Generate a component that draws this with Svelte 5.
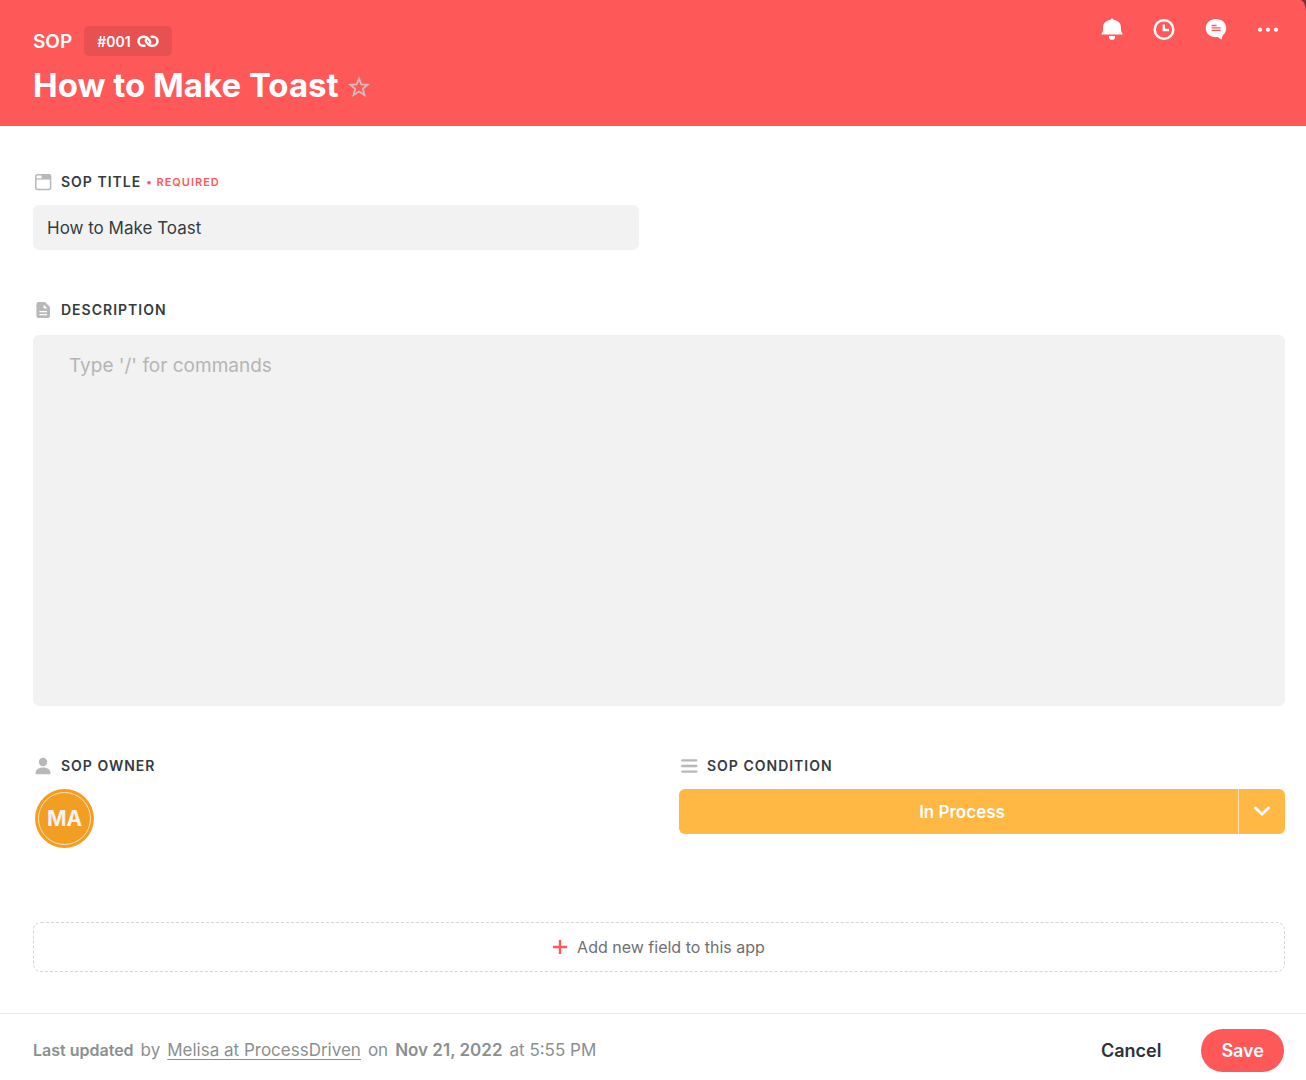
<script>
  let title = 'How to Make Toast';
  let description = '';
  let condition = 'In Process';
  let starred = false;

  const conditions = ['Not Started', 'In Process', 'Complete'];
</script>

<div class="record">
  <header class="top">
    <div class="banner">
      <div class="heading">
        <div class="app-line">
          <span class="app-name">SOP</span>
          <button class="record-id">
            #001
            <svg width="22" height="14" viewBox="0 0 22 14" fill="none" stroke="#fff" stroke-width="2.5" stroke-linecap="round">
              <path d="M7.400 11.800H6a4.500 4.500 0 0 1 0-9H7.600C10 2.800 11.200 4.600 12.400 6.200 13.200 7.300 13.400 8 13.100 8.700" />
              <path d="M14.600 2.800H16a4.500 4.500 0 0 1 0 9H14.400C12 11.800 10.800 10 9.600 8.400 8.800 7.300 8.600 6.600 8.900 5.900" />
            </svg>
          </button>
        </div>
        <div class="title-line">
          <h1>{title}</h1>
          <button class="star" aria-label="Favorite" aria-pressed={starred} on:click={() => starred = !starred}>
            <svg width="22" height="22" viewBox="0 0 22 22" fill={starred ? '#d3bcbe' : 'none'} stroke="#d3bcbe" stroke-width="1.8">
              <path d="M11 2.6 13.3 8.4 19.6 8.8 14.8 12.8 16.5 19 11 15.6 5.5 19 7.2 12.8 2.4 8.8 8.7 8.4Z" />
            </svg>
          </button>
        </div>
      </div>

      <nav class="tools" aria-label="Record tools">
        <button aria-label="Notifications">
          <svg width="24" height="24" viewBox="0 0 24 24" fill="#fff">
            <path d="M10.4 1.700a1.700 1.700 0 0 1 3.200 0C18.300 2.500 21 5.500 21 9.600v3.500L22.600 15.700V16.600H1.400v-.9L3 13.100V9.600C3 5.500 5.700 2.500 10.400 1.700Z" />
            <path d="M9 18h6v1.200a2.500 2.500 0 0 1-2.500 2.500h-1A2.500 2.500 0 0 1 9 19.200Z" />
          </svg>
        </button>
        <button aria-label="History">
          <svg width="24" height="24" viewBox="0 0 24 24" fill="none" stroke="#fff" stroke-width="2.4">
            <circle cx="12" cy="11.500" r="9.300" />
            <path d="M11.800 6.500V12H17" />
          </svg>
        </button>
        <button aria-label="Comments">
          <svg width="24" height="24" viewBox="0 0 24 24">
            <path fill="#fff" d="M12 1c5.900 0 10.200 3.900 10.200 9.200 0 2.600-.9 4.600-2.700 6.300-1.300 1.500-1.500 3-1.700 5.100-1.600-.7-3-1.500-4-2.500-.6.100-1.200.1-1.800.1-5.900 0-10.200-3.700-10.200-9S6.100 1 12 1Z" />
            <path stroke="#ff5858" stroke-width="1.300" d="M7.600 7.500h5M7.600 9.900h9M7.600 12.300h9" />
          </svg>
        </button>
        <button aria-label="More">
          <svg width="24" height="24" viewBox="0 0 24 24" fill="#fff">
            <circle cx="4" cy="11.700" r="2.100" />
            <circle cx="12" cy="11.700" r="2.100" />
            <circle cx="20" cy="11.700" r="2.100" />
          </svg>
        </button>
      </nav>
    </div>
  </header>

  <main class="fields">
    <div class="field half">
      <label for="sop-title">
        <svg width="20" height="18" viewBox="0 0 20 18">
          <rect x="2.800" y="1.800" width="14.800" height="14.800" rx="2" fill="none" stroke="#b8b8b8" stroke-width="1.500" />
          <path d="M8.500 1.500H17.500V6H8.500Z" fill="#b8b8b8" />
          <path d="M3 6H17.500" stroke="#b8b8b8" stroke-width="1.200" />
        </svg>
        SOP title
        <span class="required">• Required</span>
      </label>
      <input id="sop-title" type="text" bind:value={title} />
    </div>

    <div class="field roomy">
      <label for="sop-description">
        <svg width="20" height="18" viewBox="0 0 20 18">
          <path fill="#b8b8b8" d="M5.400 1H12L17 6v9a2 2 0 0 1-2 2H5.400a2 2 0 0 1-2-2V3a2 2 0 0 1 2-2Z" />
          <path fill="#fff" d="M10.600 3.600 14.400 7.400H11.800a1.200 1.200 0 0 1-1.200-1.200Z" />
          <path stroke="#fff" stroke-width="1.300" d="M6.400 10.700H14M6.400 13.700H14" />
        </svg>
        Description
      </label>
      <textarea id="sop-description" placeholder="Type '/' for commands" bind:value={description}></textarea>
    </div>

    <div class="row">
      <div class="field">
        <div class="label" id="owner-label">
          <svg width="20" height="18" viewBox="0 0 20 18" fill="#b8b8b8">
            <circle cx="10" cy="5" r="4.200" />
            <path d="M2.500 16.500c0-3.800 2.800-6 7.500-6s7.500 2.200 7.500 6c0 .4-.3.700-.7.700H3.200c-.4 0-.7-.3-.7-.7Z" />
          </svg>
          SOP owner
        </div>
        <button class="avatar" aria-labelledby="owner-label"><span>MA</span></button>
      </div>

      <div class="field">
        <label for="sop-condition">
          <svg width="20" height="18" viewBox="0 0 20 18" stroke="#b8b8b8" stroke-width="2.400" stroke-linecap="round">
            <path d="M3.300 3.400H17.300M3.300 9H17.300M3.300 14.600H17.300" />
          </svg>
          SOP condition
        </label>
        <div class="condition">
          <select id="sop-condition" bind:value={condition}>
            {#each conditions as option}
              <option value={option}>{option}</option>
            {/each}
          </select>
          <span class="chevron">
            <svg width="18" height="12" viewBox="0 0 18 12" fill="none" stroke="#fff" stroke-width="2.800" stroke-linecap="round" stroke-linejoin="round">
              <path d="M2.400 2 9 8.300 15.600 2" />
            </svg>
          </span>
        </div>
      </div>
    </div>

    <button class="add-field">
      <svg width="14" height="14" viewBox="0 0 14 14" stroke="#ff5858" stroke-width="2.400">
        <path d="M7 0V14M0 7H14" />
      </svg>
      Add new field to this app
    </button>
  </main>

  <footer class="bottom">
    <p class="updated">
      <strong class="lead">Last updated</strong>
      <span>by</span>
      <a href="#user">Melisa at ProcessDriven</a>
      <span>on</span>
      <strong>Nov 21, 2022</strong>
      <span>at 5:55 PM</span>
    </p>
    <div class="actions">
      <button class="cancel">Cancel</button>
      <button class="save">Save</button>
    </div>
  </footer>
</div>

<style>
  :global(body) {
    background: #fff;
  }

  .record {
    min-height: 100vh;
    display: flex;
    flex-direction: column;
    font-family: Inter, sans-serif;
    font-size: 17px;
    color: #343c3f;
  }

  .record, .record * {
    box-sizing: border-box;
  }

  button, input, textarea, select {
    margin: 0;
    padding: 0;
    border: none;
    background: none;
    font: inherit;
    color: inherit;
  }

  button, select {
    cursor: pointer;
  }

  svg {
    display: block;
    flex: none;
  }

  /* Header */
  .top {
    background: #7a3236;
  }

  .banner {
    display: flex;
    justify-content: space-between;
    align-items: flex-start;
    min-height: 126px;
    padding: 18px 26px 20px 33px;
    background: #ff5858;
    border-top-right-radius: 6px 12px;
    color: #fff;
  }

  .heading {
    padding-top: 8px;
  }

  .app-line {
    display: flex;
    align-items: center;
    gap: 12px;
  }

  .app-name {
    font-size: 19px;
    font-weight: 600;
  }

  .record-id {
    display: flex;
    align-items: center;
    gap: 6px;
    height: 30px;
    padding: 0 13px;
    border-radius: 5px;
    background: #e85152;
    font-size: 14px;
    font-weight: 600;
  }

  .title-line {
    display: flex;
    align-items: center;
    gap: 9px;
    margin-top: 8px;
  }

  .star {
    padding-top: 3px;
  }

  h1 {
    margin: 0;
    font-size: 33px;
    line-height: 42px;
    font-weight: 700;
  }

  .tools {
    display: flex;
    gap: 28px;
  }

  /* Fields */
  .fields {
    flex: 1;
    display: flex;
    flex-direction: column;
    gap: 51px;
    padding: 47px 21px 41px 33px;
  }

  .field {
    display: flex;
    flex-direction: column;
    gap: 14px;
  }

  .roomy {
    gap: 16px;
  }

  .half {
    width: calc(50% - 20px);
  }

  label, .label {
    display: flex;
    align-items: center;
    gap: 8px;
    font-size: 14px;
    line-height: 18px;
    font-weight: 600;
    letter-spacing: 1px;
    text-transform: uppercase;
  }

  .required {
    margin-left: -3px;
    font-size: 11px;
    color: #ff5858;
  }

  input {
    height: 45px;
    padding: 0 14px;
    border-radius: 6px;
    background: #f2f2f2;
  }

  textarea {
    height: 371px;
    padding: 17px 36px;
    border-radius: 6px;
    background: #f2f2f2;
    font-size: 19px;
    line-height: 28px;
    resize: none;
  }

  textarea::placeholder {
    color: #b5b5b5;
    opacity: 1;
  }

  .row {
    display: grid;
    grid-template-columns: 1fr 1fr;
    gap: 40px;
  }

  .avatar {
    width: 59px;
    height: 59px;
    margin-left: 2px;
    padding: 3px;
    border-radius: 50%;
    background: #f29e22;
  }

  .avatar span {
    display: flex;
    align-items: center;
    justify-content: center;
    height: 100%;
    border: 1px solid #fbe0b5;
    border-radius: 50%;
    font-size: 21px;
    font-weight: 700;
    color: #f2f2f2;
  }

  .condition {
    position: relative;
  }

  select {
    display: block;
    appearance: none;
    width: 100%;
    height: 45px;
    padding: 0 46px 0 6px;
    border-radius: 6px;
    background: #ffb844;
    font-weight: 600;
    color: #fff;
    text-align: center;
    text-align-last: center;
  }

  option {
    color: #343c3f;
    background: #fff;
  }

  .chevron {
    position: absolute;
    top: 0;
    right: 0;
    bottom: 0;
    width: 47px;
    display: flex;
    align-items: center;
    justify-content: center;
    border-left: 1px solid #ffe3b5;
    pointer-events: none;
  }

  .add-field {
    display: flex;
    align-items: center;
    justify-content: center;
    gap: 10px;
    height: 50px;
    margin-top: 23px;
    border: 1px dashed #d5d5d5;
    border-radius: 8px;
    font-size: 16px;
    color: #707070;
  }

  /* Footer */
  .bottom {
    display: flex;
    align-items: center;
    justify-content: space-between;
    height: 67px;
    padding: 6px 22px 0 33px;
    border-top: 1px solid #ebebeb;
  }

  .updated {
    display: flex;
    align-items: baseline;
    gap: 7px;
    margin: 0;
    color: #8a8f91;
  }

  .updated strong {
    font-weight: 600;
  }

  .updated .lead {
    font-size: 16px;
  }

  .updated a {
    color: inherit;
    text-underline-offset: 3px;
  }

  .actions {
    display: flex;
    align-items: center;
    gap: 40px;
    font-size: 18px;
    font-weight: 600;
  }

  .cancel {
    color: #2b3336;
  }

  .save {
    height: 43px;
    padding: 0 20px;
    border-radius: 22px;
    background: #ff5858;
    color: #fff;
  }
</style>
